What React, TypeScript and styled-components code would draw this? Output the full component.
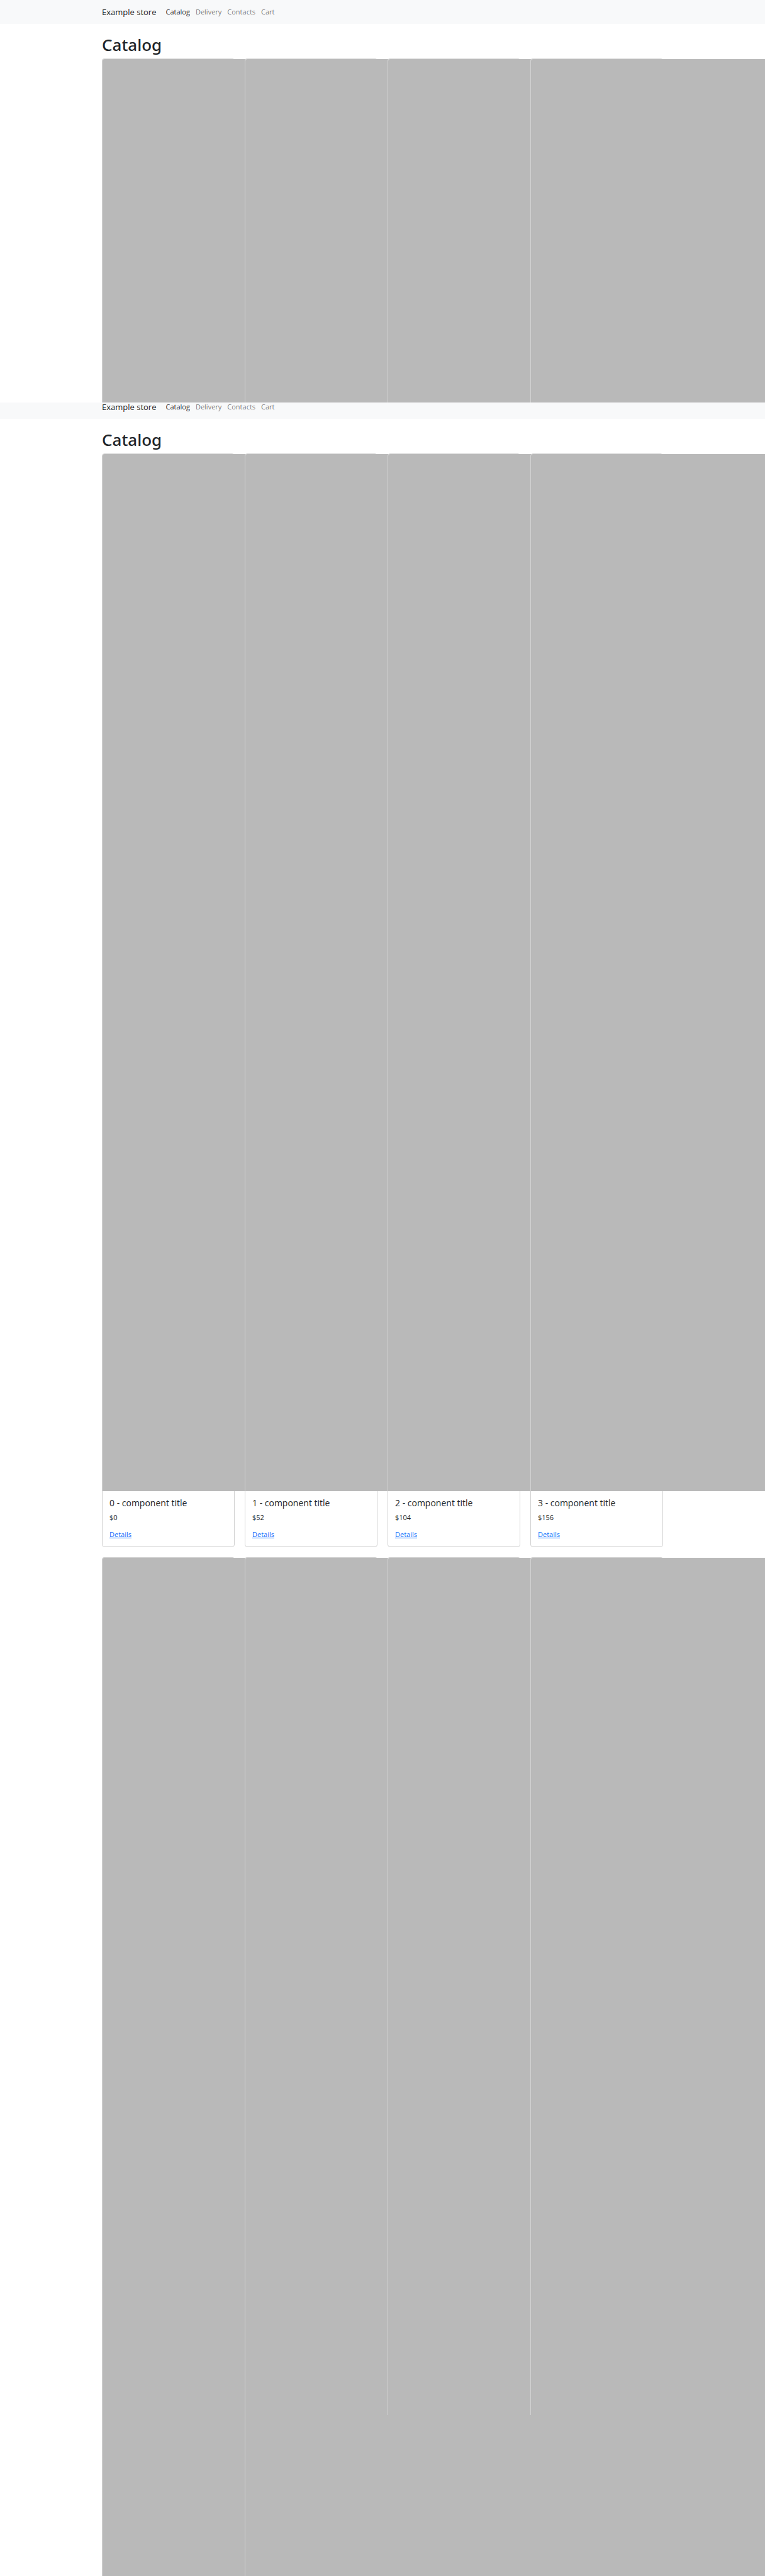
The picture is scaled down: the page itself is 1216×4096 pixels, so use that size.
import React from "react";
import styled, { createGlobalStyle } from "styled-components";

const GlobalStyle = createGlobalStyle`
  *, *::before, *::after { box-sizing: border-box; }
  body {
    margin: 0;
    background: #fff;
    color: #212529;
    font-family: "Open Sans", "Noto Sans", sans-serif;
    font-size: 11px;
    line-height: 17px;
  }
`;

const Page = styled.div`
  overflow-x: clip;
`;

const Container = styled.div`
  width: calc(100% - 324px);
  margin: 0 auto;
`;

const NavBar = styled.nav<{ $scrolled?: boolean }>`
  padding: ${(p) => (p.$scrolled ? "0 0 12px" : "12px 0")};
  background: #f8f9fa;
`;

const NavContent = styled(Container)`
  display: flex;
  align-items: center;
  line-height: 14px;
`;

const Brand = styled.a`
  margin-right: 15px;
  color: rgba(0, 0, 0, 0.9);
  font-size: 13px;
  text-decoration: none;
`;

const NavList = styled.ul`
  display: flex;
  gap: 9px;
  margin: 0;
  padding: 0;
  list-style: none;
`;

const NavLink = styled.a<{ $active?: boolean }>`
  display: block;
  color: ${(p) => (p.$active ? "rgba(0, 0, 0, 0.9)" : "rgba(0, 0, 0, 0.55)")};
  text-decoration: none;
`;

const Title = styled.h1`
  margin: 0;
  padding: 17px 0 5px;
  font-family: "Noto Sans", "Open Sans", sans-serif;
  font-size: 26px;
  font-weight: 500;
  line-height: 33px;
`;

const Grid = styled.div`
  display: grid;
  grid-template-columns: repeat(4, minmax(0, 1fr));
  align-items: start;
  gap: 16px;
`;

const Card = styled.article<{ $open?: boolean }>`
  position: relative;
  min-width: 0;
  border: 1px solid #d2d2d2;
  border-bottom-width: ${(p) => (p.$open ? "0" : "1px")};
  border-radius: ${(p) => (p.$open ? "4px 4px 0 0" : "4px")};
  background: #fff;
`;

const Picture = styled.div<{ $height: number }>`
  width: 1649px;
  height: ${(p) => p.$height}px;
  border-top-left-radius: 3px;
  background: #b9b9b9;
`;

const CardBody = styled.div`
  padding: 11px;
`;

const CardTitle = styled.h2`
  margin: 0 0 6px;
  font-size: 14px;
  font-weight: 400;
  line-height: 16px;
`;

const Price = styled.p`
  margin: 0 0 10px;
`;

const Details = styled.a`
  display: block;
  width: fit-content;
  color: #0d6efd;
  text-decoration: underline;
`;

const links = ["Catalog", "Delivery", "Contacts", "Cart"];

const products = [0, 1, 2, 3].map((id) => ({
  id,
  title: `${id} - component title`,
  price: id * 52,
}));

const previewHeights = [546, 546, 546, 546];
const loadingHeights = [1619, 1619, 1363, 1363];

function Header({ scrolled }: { scrolled?: boolean }) {
  return (
    <NavBar $scrolled={scrolled}>
      <NavContent>
        <Brand href="#">Example store</Brand>
        <NavList>
          {links.map((link, i) => (
            <li key={link}>
              <NavLink href="#" $active={i === 0}>
                {link}
              </NavLink>
            </li>
          ))}
        </NavList>
      </NavContent>
    </NavBar>
  );
}

function PictureCards({ heights }: { heights: number[] }) {
  return (
    <>
      {heights.map((height, i) => (
        <Card key={i} $open>
          <Picture $height={height} />
        </Card>
      ))}
    </>
  );
}

function ProductCards() {
  return (
    <>
      {products.map((p) => (
        <Card key={p.id}>
          <Picture $height={1649} />
          <CardBody>
            <CardTitle>{p.title}</CardTitle>
            <Price>{`$${p.price}`}</Price>
            <Details href="#">Details</Details>
          </CardBody>
        </Card>
      ))}
    </>
  );
}

export default function App() {
  return (
    <>
      <GlobalStyle />
      <Page>
        <Header />
        <Container>
          <Title>Catalog</Title>
          <Grid>
            <PictureCards heights={previewHeights} />
          </Grid>
        </Container>
        <Header scrolled />
        <Container>
          <Title>Catalog</Title>
          <Grid>
            <ProductCards />
            <PictureCards heights={loadingHeights} />
          </Grid>
        </Container>
      </Page>
    </>
  );
}
